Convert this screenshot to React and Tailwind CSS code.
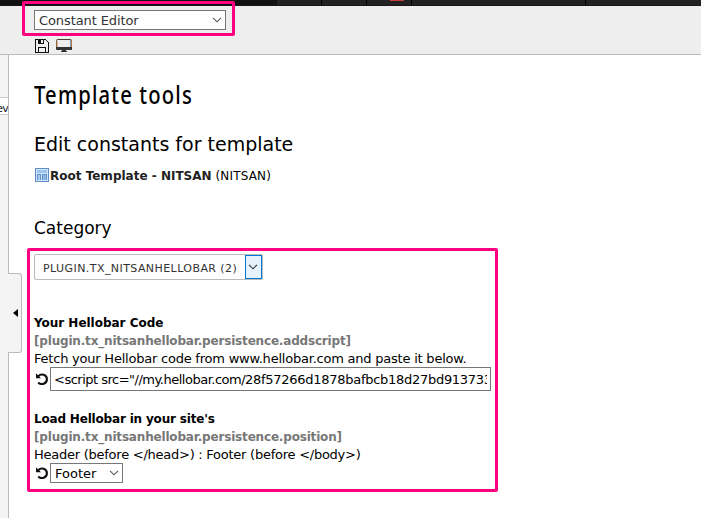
const sans = "font-['DejaVu_Sans',Verdana,sans-serif]";

function Chevron({ className }) {
  return (
    <svg className={className} width="10" height="6" viewBox="0 0 10 6" fill="none" stroke="currentColor" strokeWidth="1.1">
      <path d="M1 0.8 L5 4.8 L9 0.8" />
    </svg>
  );
}

function SaveIcon() {
  return (
    <svg width="14" height="14" viewBox="0 0 14 14" fill="none" stroke="#111" shapeRendering="crispEdges">
      <path d="M.5.5H10.5L13.5 3.5V13.5H.5Z" />
      <path d="M3.5 13.5V8.5H10.5V13.5" />
      <path d="M3 .5H9V5H3Z" fill="#111" stroke="none" />
      <path d="M6 1H8V4H6Z" fill="#eee" stroke="none" />
    </svg>
  );
}

function MonitorIcon() {
  return (
    <svg width="16" height="13" viewBox="0 0 16 13">
      <path d="M.5 9V1.5Q.5.5 1.5.5H14.5Q15.5.5 15.5 1.5V9" fill="#eee" stroke="#4a3c30" />
      <path d="M1 1.5V9" stroke="#c98a52" />
      <path d="M14.5 1V9" stroke="#7f99b5" />
      <path d="M15.5 1.5V9" stroke="#b87a48" />
      <path d="M0 8H16V10.5Q16 11 15 11H10V12H11V13H5V12H6V11H1Q0 11 0 10Z" fill="#333" />
    </svg>
  );
}

function TemplateIcon() {
  return (
    <svg width="14" height="14" viewBox="0 0 14 14" shapeRendering="crispEdges">
      <rect width="14" height="14" fill="#5f8dc4" />
      <rect x="1" y="1" width="12" height="12" fill="#d3e5f8" />
      <rect x="2" y="2" width="10" height="3" fill="#9cc4f0" />
      <rect x="2" y="6" width="4" height="6" fill="#5c91cb" />
      <rect x="3" y="7" width="2" height="5" fill="#a9cbed" />
      <rect x="7" y="6" width="5" height="6" fill="#5c91cb" />
      <rect x="8" y="7" width="3" height="5" fill="#8db7e4" />
    </svg>
  );
}

function UndoIcon() {
  return (
    <svg className="shrink-0" width="12" height="12" viewBox="0 0 12 12" fill="none">
      <path d="M2.2 3.2C5 .4 10.9 1 10.9 6.2C10.9 11 5.2 12.4 2.2 9.5" stroke="#111" strokeWidth="2.1" />
      <path d="M0 .3V5.3H5Z" fill="#111" />
    </svg>
  );
}

function Line({ className = "tracking-[-0.22px] text-[13px]", children }) {
  return <div className={`h-[18px] whitespace-nowrap leading-[20px] ${className}`}>{children}</div>;
}

export default function App() {
  return (
    <div className={`relative flex h-[518px] w-[701px] flex-col overflow-hidden bg-white text-black ${sans}`}>
      <div className="flex h-[6px] shrink-0 border-b border-[#1a1418] bg-[#222]">
        <div className="w-[277px] bg-[#111]" />
        <div className="w-[45px] border-r border-black" />
        <div className="w-[45px] border-r border-black" />
        <div className="flex w-[45px] justify-center border-r border-black pl-4">
          <div className="h-px w-[14px] bg-[#c83c3c]" />
        </div>
        <div className="w-[174px] border-r border-black" />
      </div>
      <header className="flex h-[49px] shrink-0 flex-col border-b border-[#bbb] bg-[#eee] pl-[34px] pt-[4px]">
        <div className="flex h-5 w-[192px] items-center justify-between border border-[#777] bg-white pl-1 pr-[3px]">
          <span className="whitespace-nowrap pt-px text-[13px] leading-[20px] tracking-[-0.1px] text-[#333]">Constant Editor</span>
          <Chevron className="text-[#555]" />
        </div>
        <div className="flex items-start gap-[7px] pl-[1px] pt-[9px]">
          <SaveIcon />
          <MonitorIcon />
        </div>
      </header>
      <div className="flex min-h-0 flex-1">
        <aside className="h-full w-[9px] shrink-0 overflow-hidden border-r border-[#bbb] bg-[#f4f4f4] pt-[42px]">
          <div className="flex h-[18px] justify-end border-y border-[#ccc] bg-white text-[11px] leading-[22px] tracking-[-0.8px] text-[#222]">ev</div>
        </aside>
        <main className="flex min-w-0 flex-1 flex-col pl-[25px]">
          <h1 className="mt-[22px] h-[34px] origin-left scale-x-[0.81] whitespace-nowrap font-['Noto_Sans',sans-serif] text-[25px] font-medium leading-[34px] tracking-[1.42px]">Template tools</h1>
          <h2 className="mt-[21px] h-[24px] whitespace-nowrap text-[19px] leading-[24px]">Edit constants for template</h2>
          <div className="mt-[10px] flex h-[18px] items-center gap-[1px] whitespace-nowrap pl-[1px] text-[12px] leading-[20px]">
            <TemplateIcon />
            <span className="pt-px"><b className="text-[#222]">Root Template - NITSAN</b> <span className="tracking-[0.18px]">(NITSAN)</span></span>
          </div>
          <h3 className="mt-[34px] h-[20px] text-[17px] leading-[20px]">Category</h3>
          <div className="mt-[16px] flex h-[26px] w-[229px] shrink-0 rounded-[2px] border border-[#bbb] bg-[#fdfdfd]">
            <span className="flex-1 whitespace-nowrap pl-[8px] text-[11px] leading-[27px] tracking-[0.43px] text-[#333]">PLUGIN.TX_NITSANHELLOBAR (2)</span>
            <span className="flex w-[17px] items-center justify-center border border-[#0078d7] bg-[#e5f1fb]">
              <Chevron className="-ml-px shrink-0 text-[#333]" />
            </span>
          </div>
          <section className="mt-[33px]">
            <Line className="text-[12px] font-bold tracking-[-0.02px]">Your Hellobar Code</Line>
            <Line className="text-[12px] font-bold tracking-[-0.18px] text-[#777]">[plugin.tx_nitsanhellobar.persistence.addscript]</Line>
            <Line>Fetch your Hellobar code from www.hellobar.com and paste it below.</Line>
            <div className="flex h-6 items-center gap-[2px] pl-[2px]">
              <UndoIcon />
              <div className="h-6 w-[441px] overflow-hidden border border-[#777] px-[3px]">
                <div className="overflow-hidden whitespace-nowrap text-[13px] leading-[23px]">
                  <span className="tracking-[-0.5px]">{'<script src="//my.hellobar.com/'}</span>
                  <span className="tracking-[-0.28px]">28f57266d1878bafbcb18d27bd913733</span>
                </div>
              </div>
            </div>
          </section>
          <section className="mt-[18px]">
            <Line className="text-[12px] font-bold tracking-[-0.18px]">Load Hellobar in your site's</Line>
            <Line className="text-[12px] font-bold tracking-[-0.18px] text-[#777]">[plugin.tx_nitsanhellobar.persistence.position]</Line>
            <Line className="text-[13px] tracking-[-0.25px]">{'Header (before </head>) : Footer (before </body>)'}</Line>
            <div className="flex h-5 items-center gap-[2px] pl-[2px]">
              <UndoIcon />
              <div className="flex h-5 w-[73px] items-center justify-between border border-[#777] pl-1 pr-[3px]">
                <span className="pt-px text-[13px] leading-[20px]">Footer</span>
                <Chevron className="text-[#555]" />
              </div>
            </div>
          </section>
        </main>
      </div>
      <div className="absolute left-[8px] top-[273px] flex h-[80px] w-[14px] items-center rounded-r-[3px] border border-l-0 border-[#bbb] bg-[#f4f4f4] pl-[5px]">
        <svg width="5" height="8" viewBox="0 0 5 8"><path d="M5 0V8L0 4Z" fill="#000" /></svg>
      </div>
      <div className="absolute left-[22px] top-px h-[35px] w-[213px] rounded-[2px] border-[3px] border-[#ff0080]" />
      <div className="absolute left-[27px] top-[248px] h-[244px] w-[471px] rounded-[2px] border-[3px] border-[#ff0080]" />
    </div>
  );
}
